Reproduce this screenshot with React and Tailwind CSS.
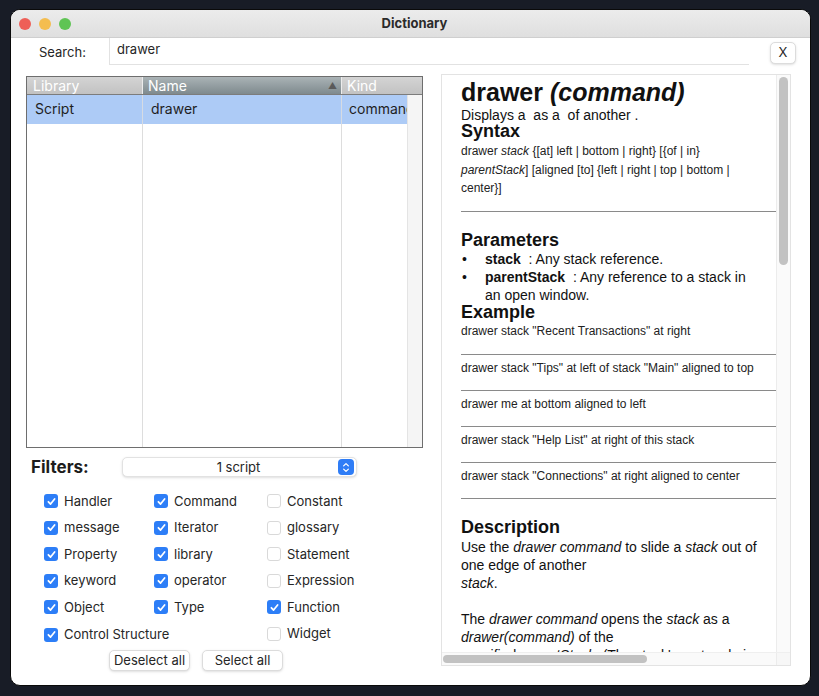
import React from 'react';

const ui = { fontFamily: 'Inter, "Liberation Sans", sans-serif' };
const doc = { fontFamily: '"Liberation Sans", Arial, sans-serif' };

const filters = [
  { label: 'Handler', checked: true },
  { label: 'Command', checked: true },
  { label: 'Constant', checked: false },
  { label: 'message', checked: true },
  { label: 'Iterator', checked: true },
  { label: 'glossary', checked: false },
  { label: 'Property', checked: true },
  { label: 'library', checked: true },
  { label: 'Statement', checked: false },
  { label: 'keyword', checked: true },
  { label: 'operator', checked: true },
  { label: 'Expression', checked: false },
  { label: 'Object', checked: true },
  { label: 'Type', checked: true },
  { label: 'Function', checked: true },
];

const examples = [
  'drawer stack "Recent Transactions" at right',
  'drawer stack "Tips" at left of stack "Main" aligned to top',
  'drawer me at bottom aligned to left',
  'drawer stack "Help List" at right of this stack',
  'drawer stack "Connections" at right aligned to center',
];

const Check = ({ checked, label, className = '' }) => (
  <div className={`flex items-center gap-[6px] h-[26.5px] ${className}`}>
    {checked ? (
      <span className="w-[14px] h-[14px] rounded-[3px] bg-[#2d7ef7] flex items-center justify-center shrink-0">
        <svg viewBox="0 0 12 12" className="w-[11px] h-[11px]">
          <path d="M2.6 6.3 L5 8.8 L9.4 3.2" stroke="white" strokeWidth="1.9" fill="none" strokeLinecap="round" strokeLinejoin="round" />
        </svg>
      </span>
    ) : (
      <span className="w-[14px] h-[14px] rounded-[3px] bg-white border border-[#d9d9d9] shrink-0"></span>
    )}
    <span className="text-[13px] text-[#262626]">{label}</span>
  </div>
);

const App = () => {
  return (
    <div className="w-[819px] h-[696px] bg-[#181c26] pt-[9px] pl-[10px] overflow-hidden" style={ui}>
      <div className="w-[801px] h-[677px] bg-white rounded-[10px] border border-[#0a0a0a] overflow-hidden flex flex-col">
        {/* Title bar */}
        <div className="h-[28px] shrink-0 bg-gradient-to-b from-[#ececec] to-[#dfdfdf] border-b border-[#cfcfcf] flex items-center">
          <div className="flex items-center gap-[8px] pl-[8px]">
            <span className="w-[12px] h-[12px] rounded-full bg-[#ee5f57]"></span>
            <span className="w-[12px] h-[12px] rounded-full bg-[#f4bd4f]"></span>
            <span className="w-[12px] h-[12px] rounded-full bg-[#5fc454]"></span>
          </div>
          <div className="flex-1 text-center text-[13px] font-bold text-[#2b2b2b] pr-[52px]">Dictionary</div>
        </div>

        {/* Search row */}
        <div className="h-[27px] shrink-0 flex items-start">
          <div className="w-[98px] pl-[28px] pt-[5px] text-[13px] text-[#262626]">Search:</div>
          <div className="w-[640px] h-[27px] border-l border-b border-[#e2e2e2] pl-[7px] pt-[2px] text-[13px] text-[#262626]">drawer</div>
          <button className="ml-[21px] mt-[4px] w-[26px] h-[22px] rounded-[5px] border border-[#dcdcdc] bg-white shadow-sm text-[13px] text-[#262626] flex items-center justify-center">X</button>
        </div>

        {/* Main area */}
        <div className="flex pt-[9px] pl-[15px]">
          {/* Left pane */}
          <div className="w-[397px] flex flex-col">
            <div className="mt-[2px] h-[372px] border border-[#6e6e6e] flex flex-col text-[14px]">
              <div className="h-[18px] flex border-b border-[#7c7c7c] text-white">
                <div className="w-[116px] bg-gradient-to-b from-[#d4d4d4] to-[#c2c2c2] border-r border-[#ececec] pl-[6px] leading-[18px]">Library</div>
                <div className="w-[199px] bg-gradient-to-b from-[#aab3b6] to-[#7f8a8e] border-r border-[#ececec] pl-[5px] leading-[18px] flex items-center justify-between pr-[4px]">
                  <span>Name</span>
                  <span className="text-[9px] text-[#5a5a5a]">▲</span>
                </div>
                <div className="flex-1 bg-gradient-to-b from-[#d4d4d4] to-[#c2c2c2] pl-[5px] leading-[18px]">Kind</div>
              </div>
              <div className="flex-1 flex">
                <div className="w-[380px] flex flex-col">
                  <div className="h-[29px] bg-[#adcbf6] flex items-center text-[#1f1f1f] pb-[3px]">
                    <div className="w-[116px] pl-[8px] border-r border-[#d6dbe3] h-[29px] -mb-[3px] flex items-center pb-[3px]">Script</div>
                    <div className="w-[199px] pl-[8px] border-r border-[#d6dbe3] h-[29px] -mb-[3px] flex items-center pb-[3px]">drawer</div>
                    <div className="flex-1 pl-[7px] overflow-hidden whitespace-nowrap">command</div>
                  </div>
                  <div className="flex-1 flex">
                    <div className="w-[116px] border-r border-[#dddddd]"></div>
                    <div className="w-[199px] border-r border-[#dddddd]"></div>
                    <div className="flex-1"></div>
                  </div>
                </div>
                <div className="flex-1 bg-[#f5f5f5] border-l border-[#e4e4e4]"></div>
              </div>
            </div>

            {/* Filters */}
            <div className="mt-[9px] flex items-center h-[20px]">
              <div className="w-[96px] pl-[5px] pt-[1px] text-[17px] font-bold text-[#1c1c1c]">Filters:</div>
              <div className="w-[235px] h-[20px] rounded-[5px] bg-white border border-[#e2e2e2] shadow-sm flex items-center">
                <div className="flex-1 text-center text-[13px] text-[#262626] pl-[16px] pt-[1px]">1 script</div>
                <span className="w-[16px] h-[16px] mr-[2px] rounded-[4px] bg-[#2f7df6] flex items-center justify-center">
                  <svg viewBox="0 0 10 14" className="w-[8px] h-[11px]">
                    <path d="M2 5 L5 2 L8 5 M2 9 L5 12 L8 9" stroke="white" strokeWidth="1.6" fill="none" strokeLinecap="round" strokeLinejoin="round" />
                  </svg>
                </span>
              </div>
            </div>

            <div className="mt-[11px] ml-[18px] grid grid-cols-[110px_113px_auto]">
              {filters.map((f) => (
                <Check key={f.label} checked={f.checked} label={f.label} />
              ))}
              <Check checked label="Control Structure" className="col-span-2 mt-[1px]" />
              <Check checked={false} label="Widget" />
            </div>

            <div className="mt-[2px] ml-[83px] flex gap-[12px]">
              <button className="w-[81px] h-[21px] rounded-[5px] border border-[#dcdcdc] bg-white shadow-sm text-[13px] text-[#262626]">Deselect all</button>
              <button className="w-[81px] h-[21px] rounded-[5px] border border-[#dcdcdc] bg-white shadow-sm text-[13px] text-[#262626]">Select all</button>
            </div>
          </div>

          {/* Right pane */}
          <div className="ml-[18px] w-[350px] h-[592px] border border-[#e3e3e3] flex flex-col" style={doc}>
            <div className="flex-1 flex min-h-0">
              <div className="flex-1 overflow-hidden pl-[19px] text-[#111]">
                <div className="pt-[3px] text-[25px] leading-[28px] font-bold whitespace-nowrap">drawer <i>(command)</i></div>
                <div className="mt-[1px] text-[14px] leading-[16px]">Displays a&nbsp; as a&nbsp; of another .</div>
                <div className="text-[18px] leading-[17px] font-bold">Syntax</div>
                <div className="mt-[2px] text-[12px] leading-[18.5px] text-[#222] whitespace-nowrap">
                  drawer <i>stack</i> {'{[at] left | bottom | right} [{of | in}'}<br />
                  <i>parentStack</i>] [aligned [to] {'{left | right | top | bottom |'}<br />
                  {'center}]'}
                </div>
                <div className="mt-[13px] border-t border-[#8a8a8a]"></div>
                <div className="mt-[18px] text-[18px] leading-[20px] font-bold">Parameters</div>
                <div className="text-[14px] leading-[18px]">
                  <div className="flex">
                    <span className="w-[24px] pl-[1px]">•</span>
                    <span><b>stack</b>&nbsp; : Any stack reference.</span>
                  </div>
                  <div className="flex">
                    <span className="w-[24px] pl-[1px]">•</span>
                    <span className="whitespace-nowrap"><b>parentStack</b>&nbsp; : Any reference to a stack in<br />an open window.</span>
                  </div>
                </div>
                <div className="-mt-[1px] text-[18px] leading-[18px] font-bold">Example</div>
                {examples.map((e, i) => (
                  <div key={i}>
                    <div className={`${i === 0 ? 'mt-[1px]' : 'mt-[4px]'} text-[12px] leading-[18px] text-[#222] whitespace-nowrap`}>{e}</div>
                    <div className={`${i === 0 ? 'mt-[14px]' : 'mt-[13px]'} border-t border-[#8a8a8a]`}></div>
                  </div>
                ))}
                <div className="mt-[19px] text-[18px] leading-[18px] font-bold">Description</div>
                <div className="mt-[2px] text-[14px] leading-[18px] whitespace-nowrap">
                  Use the <i>drawer command</i> to slide a <i>stack</i> out of<br />
                  one edge of another<br />
                  <i>stack</i>.<br />
                  <br />
                  The <i>drawer command</i> opens the <i>stack</i> as a<br />
                  <i>drawer(command)</i> of the<br />
                  specified <i>parentStack</i>. (The stack's rectangle is
                </div>
              </div>
              <div className="w-[14px] bg-[#fafafa] border-l border-[#ececec] pt-[2px] flex justify-center">
                <div className="w-[9px] h-[188px] rounded-full bg-[#c2c2c2]"></div>
              </div>
            </div>
            <div className="h-[13px] shrink-0 flex bg-[#fafafa] border-t border-[#efefef]">
              <div className="flex-1 flex items-center pl-[1px]">
                <div className="w-[204px] h-[8px] rounded-full bg-[#c2c2c2]"></div>
              </div>
              <div className="w-[14px] bg-[#f7f7f7] border-l border-[#ececec]"></div>
            </div>
          </div>
        </div>
      </div>
    </div>
  );
};

export default App;
